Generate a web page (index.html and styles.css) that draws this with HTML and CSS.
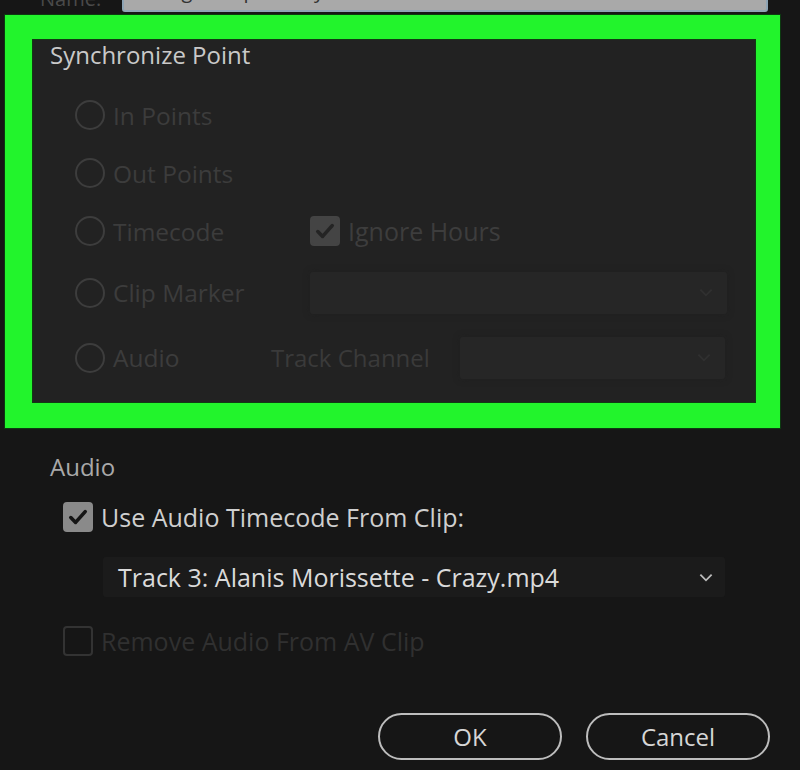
FILE: index.html
```html
<!DOCTYPE html>
<html>
<head>
    <meta charset="utf-8" />
    <title>Synchronize</title>
    <link rel="stylesheet" href="styles.css">
</head>
<body>
    <div id="dialog">
        <div class="top-row">
            <div class="top-label">Name:</div>
            <div class="top-input">Merged Clip - Crazy</div>
        </div>

        <div class="highlight">
            <div class="sync-panel">
                <div class="sync-title">Synchronize Point</div>

                <div class="sync-row">
                    <div class="radio-item"><span class="radio"></span>In Points</div>
                </div>
                <div class="sync-row">
                    <div class="radio-item"><span class="radio"></span>Out Points</div>
                </div>
                <div class="sync-row">
                    <div class="radio-item"><span class="radio"></span>Timecode</div>
                    <div class="check-item dim"><span class="box checked"><svg viewBox="0 0 20 20"><path d="M4 10.5l4 4 8-9" /></svg></span>Ignore Hours</div>
                </div>
                <div class="sync-row tall">
                    <div class="radio-item"><span class="radio"></span>Clip Marker</div>
                    <div class="select dim-select wide"><svg class="chev" viewBox="0 0 12 8"><path d="M1 1.5l5 5 5-5" /></svg></div>
                </div>
                <div class="sync-row tall">
                    <div class="radio-item short"><span class="radio"></span>Audio</div>
                    <div class="track-label">Track Channel</div>
                    <div class="select dim-select narrow"><svg class="chev" viewBox="0 0 12 8"><path d="M1 1.5l5 5 5-5" /></svg></div>
                </div>
            </div>
        </div>

        <div class="audio-section">
            <div class="audio-title">Audio</div>
            <div class="check-item live"><span class="box on"><svg viewBox="0 0 20 20"><path d="M4 10.5l4 4 8-9" /></svg></span>Use Audio Timecode From Clip:</div>
            <div class="select track-select">
                <span>Track 3: Alanis Morissette - Crazy.mp4</span>
                <svg class="chev" viewBox="0 0 12 8"><path d="M1 1.5l5 5 5-5" /></svg>
            </div>
            <div class="check-item off"><span class="box"></span>Remove Audio From AV Clip</div>
        </div>

        <div class="buttons">
            <div class="btn">OK</div>
            <div class="btn">Cancel</div>
        </div>
    </div>
</body>
</html>
```

FILE: styles.css
```css
*{
    padding:0;
    margin:0;
    box-sizing:border-box;
}
body{
    background:#161616;
    font-family:"Open Sans","Noto Sans",sans-serif;
    width:800px;
    height:770px;
    overflow:hidden;
}
#dialog{
    width:800px;
    height:770px;
}

/* clipped name field at the very top */
.top-row{
    height:12px;
    overflow:hidden;
    display:flex;
    align-items:flex-end;
}
.top-label{
    width:122px;
    padding-left:40px;
    color:#4a4a4a;
    font-size:20px;
    line-height:30px;
    margin-bottom:-2px;
}
.top-input{
    width:646px;
    height:30px;
    background:#a9a9a9;
    border:2px solid #8ea4b4;
    border-radius:3px;
    color:#333;
    font-size:20px;
    line-height:14px;
    padding-left:20px;
}

/* green highlight frame */
.highlight{
    margin:3px 0 0 5px;
    width:775px;
    height:413px;
    background:#22f42c;
    padding:25px 25px 26px 28px;
    box-shadow:0 0 0 1px #0c3a10;
}
.sync-panel{
    height:100%;
    background:#222222;
    padding:0 0 0 17px;
    box-shadow:0 0 0 1px #123a14;
}
.sync-title{
    height:46px;
    padding-top:0;
    font-size:24px;
    line-height:30px;
    color:#c9c9c9;
}
.sync-row{
    height:58px;
    padding-left:25px;
    display:flex;
    align-items:center;
    color:#3c3c3c;
    font-size:24.5px;
}
.sync-row.tall{
    height:65px;
}
.radio-item{
    width:235px;
    display:flex;
    align-items:center;
    gap:8px;
}
.radio-item.short{
    width:196px;
}
.radio{
    width:30px;
    height:30px;
    border:2px solid #3d3d3d;
    border-radius:50%;
    flex:none;
}
.track-label{
    width:189px;
    color:#3a3a3a;
    font-size:24px;
}

.check-item{
    display:flex;
    align-items:center;
    gap:8px;
    font-size:25px;
}
.box{
    width:30px;
    height:30px;
    border:2px solid #2f2f2f;
    border-radius:4px;
    flex:none;
    display:flex;
    align-items:center;
    justify-content:center;
}
.box svg{
    width:24px;
    height:24px;
    fill:none;
    stroke-width:3;
    stroke-linecap:round;
    stroke-linejoin:round;
}
.check-item.dim{
    color:#3d3d3d;
}
.box.checked{
    background:#444;
    border-color:#444;
}
.box.checked svg{
    stroke:#242424;
}

.select{
    height:42px;
    border-radius:3px;
    display:flex;
    align-items:center;
    justify-content:flex-end;
    padding-right:14px;
}
.chev{
    width:14px;
    height:9px;
    fill:none;
    stroke-width:1.6;
}
.dim-select{
    background:#262626;
    box-shadow:0 0 6px #1f1f1f;
}
.dim-select .chev{
    stroke:#303030;
}
.select.wide{
    width:417px;
}
.select.narrow{
    width:265px;
}

/* audio section */
.audio-section{
    padding:24px 0 0 50px;
    height:285px;
}
.audio-title{
    color:#a9a9a9;
    font-size:24px;
    line-height:30px;
    height:48px;
}
.check-item.live{
    margin-left:13px;
    color:#cfcfcf;
    height:34px;
}
.box.on{
    background:#8a8a8a;
    border-color:#8a8a8a;
}
.box.on svg{
    stroke:#151515;
}
.track-select{
    margin:23px 0 0 53px;
    width:622px;
    height:40px;
    background:#1b1b1b;
    justify-content:space-between;
    padding:0 12px 0 15px;
    color:#dadada;
    font-size:25px;
}
.track-select .chev{
    stroke:#bbb;
}
.check-item.off{
    margin:27px 0 0 13px;
    color:#303030;
}
.check-item.off .box{
    border-color:#333;
}

.buttons{
    display:flex;
    justify-content:flex-end;
    gap:24px;
    padding-right:30px;
}
.btn{
    width:184px;
    height:47px;
    border:2px solid #bdbdbd;
    border-radius:24px;
    color:#d6d6d6;
    font-size:24px;
    text-align:center;
    line-height:43px;
}
```
